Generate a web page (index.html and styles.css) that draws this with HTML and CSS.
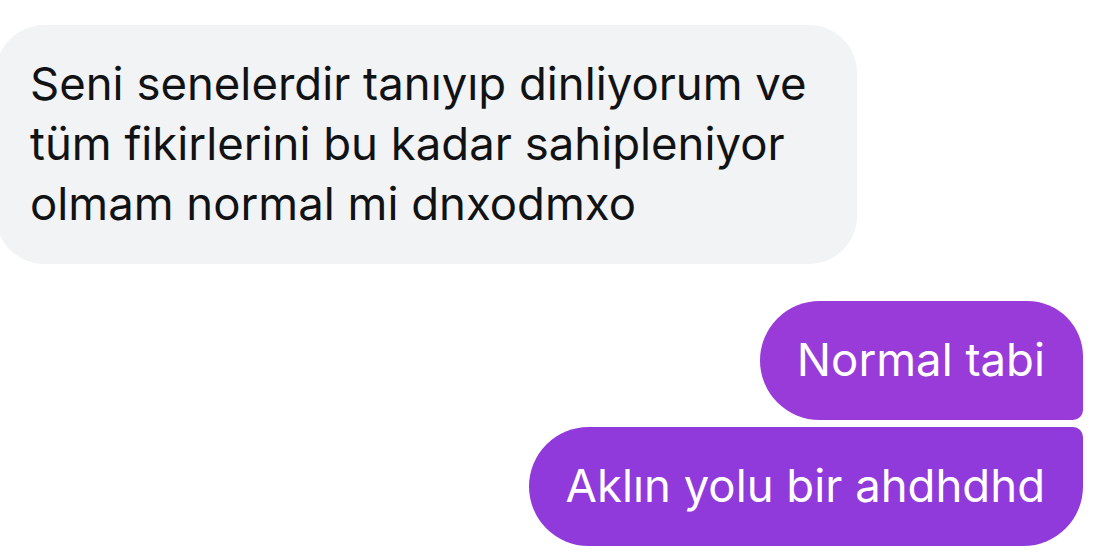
FILE: index.html
```html
<!DOCTYPE html>
<html lang="tr">
<head>
  <meta charset="UTF-8" />
  <meta name="viewport" content="width=device-width, initial-scale=1.0" />
  <title>Mesajlar</title>
  <link rel="stylesheet" href="styles.css">
</head>
<body>
  <div class="thread">
    <div class="msg incoming">
      Seni senelerdir tanıyıp dinliyorum ve tüm fikirlerini bu kadar sahipleniyor olmam normal mi dnxodmxo
    </div>

    <div class="group">
      <div class="msg outgoing first">Normal tabi</div>
      <div class="msg outgoing last">Aklın yolu bir ahdhdhd</div>
    </div>
  </div>
</body>
</html>
```

FILE: styles.css
```css
body {
  margin: 0;
  padding: 0;
  background: #ffffff;
  font-family: 'Inter', 'Roboto', sans-serif;
  overflow: hidden;
}

.thread {
  display: flex;
  flex-direction: column;
  padding-top: 25px;
}

.msg {
  font-size: 45.5px;
  line-height: 60px;
  padding: 29px 36px 30px;
  box-sizing: border-box;
}

.incoming {
  align-self: flex-start;
  margin-left: -4px;
  width: 861px;
  padding-left: 34px;
  padding-right: 30px;
  background: #f2f3f5;
  color: #111214;
  border-radius: 48px;
}

.group {
  display: flex;
  flex-direction: column;
  align-items: flex-end;
  gap: 7px;
  margin-top: 37px;
  margin-right: 24px;
}

.outgoing {
  color: #ffffff;
  padding-left: 37px;
  padding-right: 38px;
}

.outgoing.first {
  background: #993bd8;
  border-radius: 60px 56px 10px 60px;
}

.outgoing.last {
  background: #913adb;
  border-radius: 60px 10px 60px 60px;
}
```
